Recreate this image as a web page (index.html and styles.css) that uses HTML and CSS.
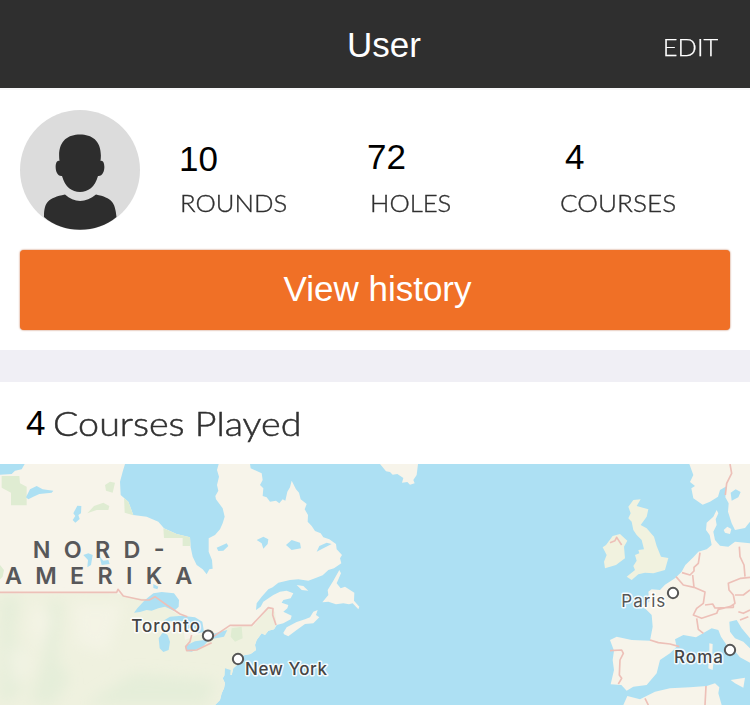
FILE: index.html
```html
<!DOCTYPE html>
<html lang="en">
<head>
<meta charset="utf-8">
<title>User</title>
<link rel="stylesheet" href="styles.css">
</head>
<body>
<header class="bar"><span></span><h1>User</h1><a class="edit">EDIT</a></header>
<main>
<section class="profile">
  <div class="summary">
    <svg class="avatar" viewBox="0 0 120 120">
      <circle cx="60" cy="60" r="60" fill="#dcdcdc"/>
      <path fill="#2d2d2d" d="M39.5 51C37 32 47 24.500 60 24.500S83 32 80.500 51C86 49 86 67 78 66C75 77 68 82 60 82S45 77 42 66C34 67 34 49 39.500 51ZM24 107C24 92 28 88 45 84.500C54 93 66 93 76 84.500C92 88 95 92 96.500 107C77 124 43 124 24 107Z"/>
    </svg>
    <div class="stat rounds"><b>10</b><span>ROUNDS</span></div>
    <div class="stat holes"><b>72</b><span>HOLES</span></div>
    <div class="stat courses"><b>4</b><span>COURSES</span></div>
  </div>
  <button class="history">View history</button>
</section>
<h2 class="played"><b>4</b><span>Courses Played</span></h2>
<svg class="map" viewBox="0 12 2250 723">
  <defs>
    <filter id="haze" x="-20%" y="-20%" width="140%" height="140%"><feGaussianBlur stdDeviation="20"/></filter>
    <clipPath id="america"><path id="na" d="M0 12H375L368 35 360 65 362 105 385 125 400 165 440 170 475 185 492 205 530 222 570 232 572 262 578 290 590 315 608 328 620 343 628 328 638 326 636 300 626 275 626 235 645 225 660 208 668 190 674 170 668 145 648 118 646 108 655 92 651 75 657 50 651 30 656 12H750L752 25 785 40 788 60 780 75 790 85 788 108 800 112 810 125 828 122 838 130 848 118 856 122 862 95 870 82 875 62 888 88 897 98 902 118 920 132 914 148 924 165 923 185 935 198 945 213 962 220 970 232 988 238 1008 252 1010 268 1026 285 1020 295 1024 310 1002 325 985 330 968 346 945 355 925 362 895 358 870 360 835 368 818 382 805 388 785 410 770 430 768 450 782 440 790 425 820 405 840 395 860 392 880 400 872 415 850 420 845 428 865 435 862 445 850 455 875 467 872 478 850 490 830 495 822 508 805 512 795 525 785 520 770 540 765 555 768 570 752 582 735 585 715 590 722 605 700 625 695 645 678 640 668 655 675 670 672 685 665 700 660 720 645 735H0Z"/></clipPath>
  </defs>
  <rect y="12" width="2250" height="723" fill="#ade0f3"/>
  <use href="#na" fill="#f7f4ea"/>
  <g clip-path="url(#america)">
    <path fill="#eff1df" d="M0 400H350L380 410 465 420 545 470 555 540 590 525 650 520 700 498H760L805 445 825 455 830 500 900 735H0Z"/>
    <g filter="url(#haze)">
      <path fill="#dcecd3" opacity=".5" d="M0 410H60L40 540 90 580 60 700 0 735ZM150 420 190 430 170 590 210 660 160 735 90 730 130 600ZM250 735 400 640 650 660 620 735Z"/>
      <path fill="#f6f5e9" opacity=".6" d="M20 570 80 560 100 620 40 680ZM100 430 160 470 120 580 90 500ZM220 430 370 430 320 580 230 550Z"/>
    </g>
    <path fill="#dfecd2" d="M5 48H58L60 70 80 80V136H33V98L5 83ZM315 75 330 65 345 68 338 98 318 92ZM262 160 282 138 310 128 328 138 325 150 290 150ZM372 110 390 130 400 166 374 158ZM490 205 535 222 572 230V258H548V234H492ZM0 315 12 330 8 350 0 358ZM695 505 725 500 728 535 705 545 692 530Z"/>
  </g>
  <g fill="#ade0f3">
    <path d="M0 12H74L65 28 45 32 35 42 0 44ZM78 112 90 88 110 78 128 88 160 92 155 98 118 102 100 110 85 118ZM220 160 232 137 244 138 243 160 235 165 239 177 226 188 218 180 226 168ZM250 285 265 280 278 285 273 315 262 322 264 300ZM298 288 310 302 325 300 329 312 305 315ZM460 372 475 380 472 388 460 384Z"/>
    <path d="M402 458 412 445 435 420 460 400 485 396 522 400 537 420 536 440 522 453 495 440 475 445 455 452 440 450 420 456ZM490 515 503 526 510 545 506 570 490 576 479 565 476 535ZM490 482 510 470 545 467 585 472 607 485 612 515 595 520 580 500 555 510 548 485ZM555 558 585 544 630 538 610 558 575 575 559 573ZM630 525 650 518 682 510 672 530 640 536Z"/>
    <path d="M650 263 680 250 685 258 670 272 655 273ZM770 240 790 230 805 238 803 252 790 266 785 250ZM858 255 875 240 900 248 903 265 875 270ZM950 275 958 258 980 248 995 252 970 265ZM675 625 692 630 690 650 674 650Z"/>
  </g>
  <path class="land" d="M850 518 860 502 890 486 915 478 930 472 940 455 953 450 948 465 958 472 940 490 915 492 890 510 865 529 852 523ZM967 427 985 405 983 390 1000 362 1018 330 1023 340 1010 370 1022 385 1035 380 1063 398 1062 422 1078 440 1075 448 1058 430 1047 433 1030 430 1008 433 985 425ZM890 375 910 378 925 392 905 390ZM1140 12H1254L1250 45 1240 60 1244 70 1230 74 1222 66 1206 68 1210 54 1192 42 1178 44 1170 36 1158 34Z"/>
  <path class="land" d="M2068 12H2187L2185 40 2195 70 2160 90 2154 110 2130 125 2108 134 2080 115 2074 85 2085 78 2070 66 2080 45ZM2187 12H2250V185L2235 204 2205 210 2195 190 2184 155 2186 130 2176 112 2180 75ZM2212 88 2200 105 2188 112 2192 90ZM2120 188 2140 170 2150 150 2155 160 2147 178 2150 195 2140 215 2145 240 2160 257 2185 260 2205 245 2250 250V608L2220 592 2200 568 2180 555 2163 530 2155 510 2135 505 2105 522 2088 532 2050 525 2025 538 2030 560 2010 580 1980 600 1970 640 1940 675 1900 680 1880 692 1864 675 1832 673 1842 630 1838 600 1842 572 1830 540 1850 530 1895 540 1950 542 1958 500 1955 465 1940 450 1925 438 1948 425 1945 395 1955 388 1980 390 1995 374 2025 355 2045 335 2056 315 2080 292 2095 275 2120 268 2135 255 2129 225 2118 210ZM2171 210 2182 200 2194 207 2190 222 2175 218Z"/>
  <path class="land" d="M1870 735 1882 708 1920 718 1965 695 2010 685 2070 682 2120 678 2145 670 2158 682 2155 700 2165 735ZM2128 550 2138 552 2137 580 2128 576ZM2126 588 2142 595 2138 630 2125 625ZM2192 660 2235 653 2230 683 2205 670Z"/>
  <g fill="#f1f2df">
    <path d="M1885 140 1900 120 1922 118 1910 138 1945 148 1940 170 1922 195 1940 205 1962 230 1970 258 1983 290 2005 294 1995 330 1960 340 1935 338 1915 343 1895 360 1880 350 1905 330 1900 318 1910 302 1905 285 1918 280 1915 270 1932 268 1925 240 1910 225 1900 210 1895 185 1885 175 1892 160ZM1818 255 1838 228 1860 222 1882 242 1872 260 1875 295 1848 315 1815 325 1812 305 1820 285 1808 262Z"/>
  </g>
  <g fill="#ade0f3"><path d="M2192 98 2207 88 2222 96 2215 112 2195 122ZM2188 485 2210 480 2225 505 2250 535V565L2230 545 2205 535 2190 515ZM2054 292 2064 295 2064 305 2054 308Z"/></g>
  <g class="border">
    <path d="M0 397H350L354 388 370 408 425 420 448 420 465 410 500 435 540 462 562 470M575 525 570 545 557 560 560 572 590 570 635 548M640 530 690 496H755L805 443 819 446 818 465 828 495"/>
    <path d="M2190 12 2195 40 2180 70 2176 105M1830 248 1845 242 1850 232 1865 255M2046 338 2070 345 2082 333V322L2095 310 2100 278M2028 350 2050 375 2082 382 2078 345M2082 382 2115 396 2110 430 2090 445 2080 465 2105 475 2150 460 2155 448 2190 440 2205 430 2200 405 2187 390 2185 370 2222 355 2250 352M2115 435 2138 432 2145 444 2200 442 2200 432M2218 260 2220 290 2232 315 2235 350M2205 405 2230 405 2250 390M2215 455 2230 460 2250 450M2220 480 2245 470M2090 475 2095 508 2110 520M1950 540 1975 548 2010 552 2038 560M1830 572 1865 570 1870 580 1860 600 1858 645 1865 655 1855 672M1935 715 1945 735M2118 678 2115 735"/>
  </g>
  <g class="markers"><circle cx="624" cy="527" r="15.500"/><circle cx="714" cy="597" r="15.500"/><circle cx="2019" cy="399" r="15.500"/><circle cx="2190" cy="570" r="15.500"/></g>
  <g class="continent"><text x="98" y="295" textLength="396">NORD-</text><text x="15" y="372" textLength="562">AMERIKA</text></g>
  <g class="city"><text x="394" y="517" textLength="206">Toronto</text><text x="735" y="644" textLength="246">New York</text><text class="regular" x="1864" y="440" textLength="132">Paris</text><text x="2022" y="609" textLength="147">Roma</text></g>
</svg>
</main>
</body>
</html>
```
FILE: styles.css
```css
* { box-sizing: border-box; }
body { margin: 0; background: #fff; color: #303030; font-family: "Liberation Sans", Arial, sans-serif; overflow: hidden; }
.bar { height: 88px; background: #2f2f2f; color: #fff; display: grid; grid-template-columns: 1fr auto 1fr; align-items: center; padding-left: 18px; }
h1 { margin: 2px 0 0; font-size: 35px; font-weight: 400; line-height: 40px; }
.edit { font: 300 24px/30px Lato, sans-serif; justify-self: end; margin: 6px 32px 0 0; transform: scaleX(1.06); transform-origin: right; -webkit-text-stroke: .25px; }
.profile { height: 294px; padding: 20px 20px 0; border-top: 2px solid #f7f7f9; border-bottom: 32px solid #f0eff5; }
.summary { display: grid; grid-template-columns: 160px 190px 190px 170px; height: 120px; }
.avatar { width: 120px; height: 120px; }
.stat { display: flex; flex-direction: column; align-items: flex-start; padding-top: 29px; }
.stat b, .played b { font: 400 35px/40px "Liberation Sans", Arial, sans-serif; color: #000; }
.stat span { font: 300 24px/30px Lato, sans-serif; margin-top: 9px; transform-origin: left; white-space: nowrap; transform: scaleX(1.07); -webkit-text-stroke: .35px; }
.rounds b { margin-left: -1px; }
.holes b { margin: -2px 0 2px -3px; }
.courses b { margin: -2px 0 2px 5px; }
.stat.courses span { transform: scaleX(1.09); }
.history { width: 710px; height: 80px; margin-top: 20px; padding: 0 0 2px 5px; border: 0; border-radius: 4px; background: #f07026; box-shadow: 0 0 2px #b86840; color: #fff; font: 400 35px "Liberation Sans", Arial, sans-serif; display: block; }
.played { height: 82px; margin: 0; padding-left: 26px; display: flex; align-items: center; }
.played span { font: 300 34px/40px Lato, sans-serif; margin-left: 8px; transform: scaleX(1.108); transform-origin: left; -webkit-text-stroke: .5px; }
.map { display: block; width: 750px; height: 241px; }
.land { fill: #f7f4ea; }
.border { fill: none; stroke: #edc0b8; stroke-width: 5; stroke-linejoin: round; }
.markers { fill: #fff; stroke: #555; stroke-width: 6; }
.continent { font: 600 70px/1 Inter, sans-serif; fill: #58585a; }
.city { font: 500 51px Inter, sans-serif; fill: #454545; stroke: #fff; stroke-opacity: .85; stroke-width: 9; paint-order: stroke; stroke-linejoin: round; }
.city .regular { font-weight: 400; fill: #555; }
```
